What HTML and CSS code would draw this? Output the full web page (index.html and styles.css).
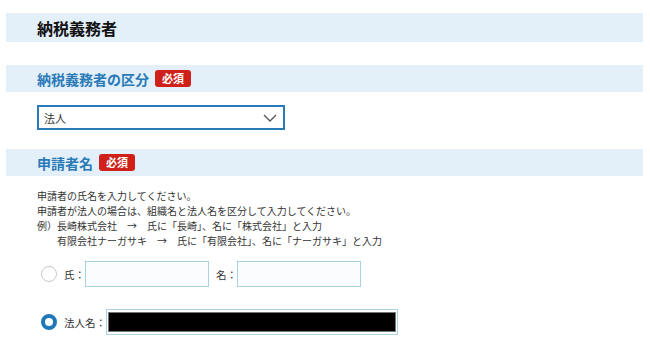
FILE: index.html
```html
<!doctype html>
<html lang="ja">
<head>
    <meta charset="utf-8" />
    <meta name="viewport" content="width=device-width,initial-scale=1" />
    <title>納税義務者</title>
    <link rel="stylesheet" href="styles.css">
</head>
<body>
    <div class="page">
        <h1 class="band band-main">納税義務者</h1>

        <h2 class="band band-sub">納税義務者の区分 <span class="req">必須</span></h2>
        <div class="block">
            <div class="select">
                <span>法人</span>
                <svg width="14" height="8" viewBox="0 0 14 8"><path d="M1 1 L7 7 L13 1" fill="none" stroke="#555" stroke-width="1.3"/></svg>
            </div>
        </div>

        <h2 class="band band-sub">申請者名 <span class="req">必須</span></h2>
        <div class="note">
            <p>申請者の氏名を入力してください。</p>
            <p>申請者が法人の場合は、組織名と法人名を区分して入力してください。</p>
            <p>例）長崎株式会社　→　氏に「長崎」、名に「株式会社」と入力</p>
            <p class="indent">有限会社ナーガサキ　→　氏に「有限会社」、名に「ナーガサキ」と入力</p>
        </div>

        <div class="name-row">
            <span class="radio"></span>
            <label class="lbl">氏：</label>
            <input class="txt w124" type="text" />
            <label class="lbl lbl-gap">名：</label>
            <input class="txt w124" type="text" />
        </div>
        <div class="name-row row2">
            <span class="radio on"></span>
            <label class="lbl">法人名：</label>
            <div class="txt redacted"><div class="fill"></div></div>
        </div>
    </div>
</body>
</html>
```

FILE: styles.css
```css
body { margin:0; font-family:"Noto Sans CJK JP", "Noto Sans", sans-serif; color:#222; background:#fff; }
.page { padding:13px 7px 0 6px; }
.band { background:#e3f0fa; margin:0; padding:0 0 0 31px; font-weight:700; display:flex; align-items:center; }
.band-main { height:29px; font-size:16px; color:#111; margin-bottom:23px; }
.band-sub { height:27px; font-size:14px; color:#2a7ab8; gap:6px; }
.req { background:#d0201a; color:#fff; font-size:11px; border-radius:3px; padding:0 7px; height:17px; line-height:17px; display:inline-block; }
.block { padding:13px 0 19px 31px; }
.select { width:248px; height:25px; box-sizing:border-box; border:2px solid #2a7ab8; display:flex; align-items:center; justify-content:space-between; padding:0 6px 0 5px; font-size:11px; color:#333; }
.note { padding:12px 0 0 31px; font-size:10px; color:#333; }
.note p { margin:0; line-height:15px; }
.note .indent { padding-left:20px; }
.name-row { display:flex; align-items:center; padding:13px 0 0 35px; font-size:10.5px; }
.row2 { padding-top:22px; }
.radio { width:16px; height:16px; border:1px solid #c8c8c8; border-radius:50%; margin-right:7px; box-sizing:border-box; background:#fff; }
.radio.on { border:4px solid #1f78b8; }
.lbl { color:#333; }
.lbl-gap { margin-left:7px; }
.txt { height:26px; box-sizing:border-box; border:1px solid #a9d2e6; background:#fafcfd; margin:0; }
.w124 { width:124px; }
.redacted { width:292px; padding:2px 1px; background:#fff; }
.fill { height:100%; background:#000; border:1px solid #777; box-sizing:border-box; }
```
